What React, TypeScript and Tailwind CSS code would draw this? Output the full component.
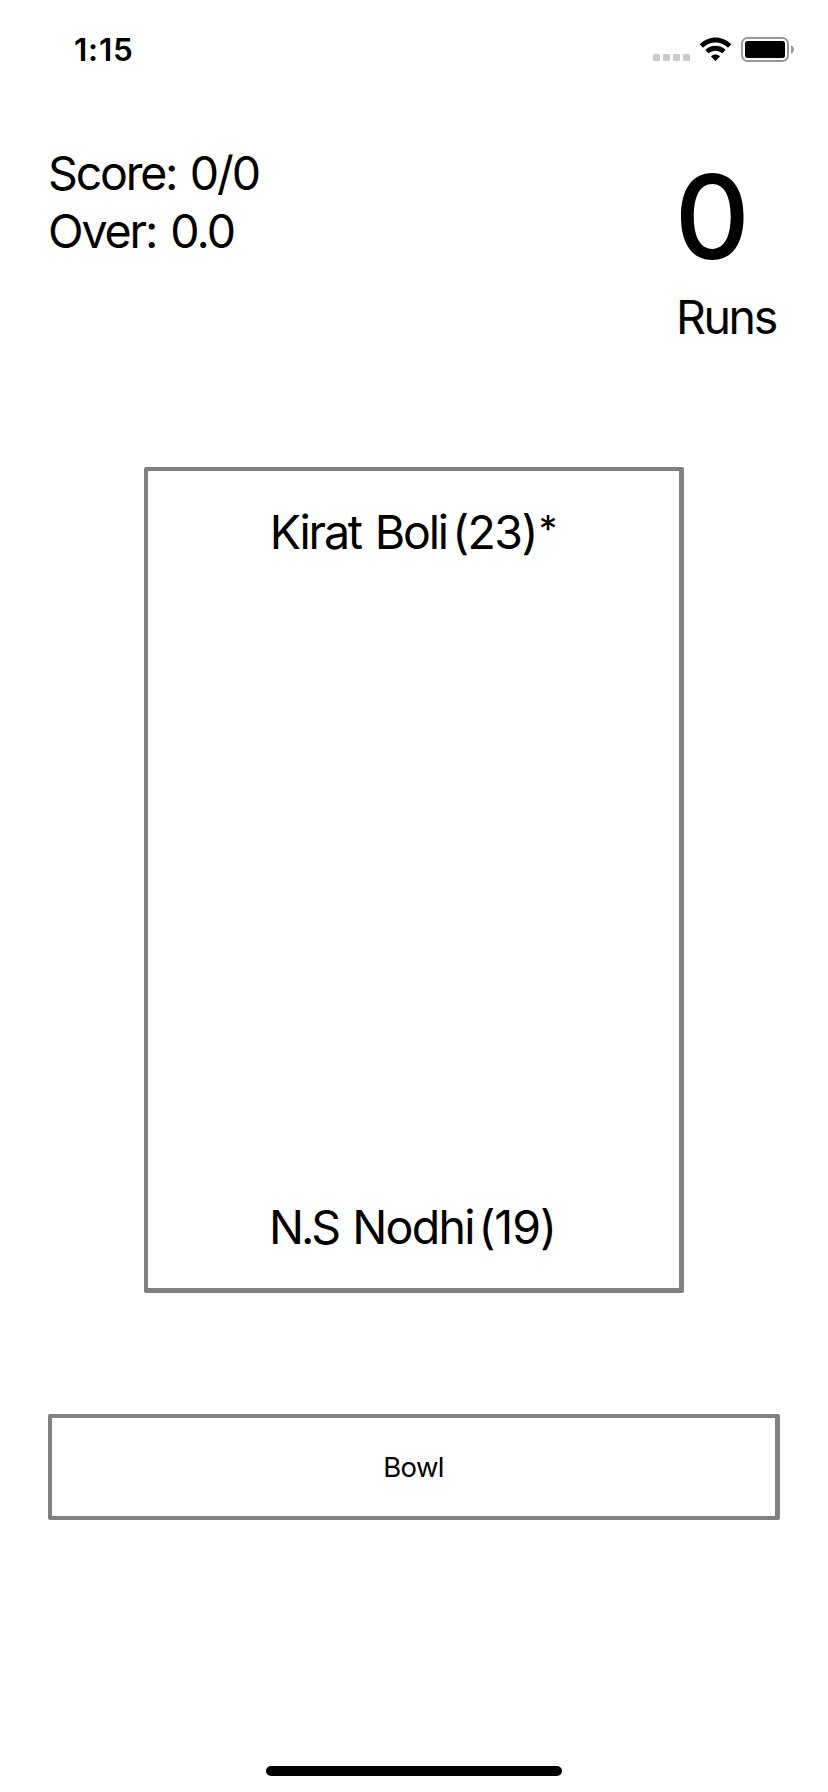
function StatusIcons() {
  return (
    <svg width="150" height="40" viewBox="650 30 150 40" aria-hidden="true">
      <g fill="#c9c9c9">
        <rect x="653" y="54" width="7" height="7" rx="1.5" />
        <rect x="663" y="54" width="7" height="7" rx="1.5" />
        <rect x="673" y="54" width="7" height="7" rx="1.5" />
        <rect x="683" y="54" width="7" height="7" rx="1.5" />
      </g>
      <g>
        <path d="M699.7 44.3C708.5 35.2 722.5 35.2 731.3 44.3L728 47.7C721 40.7 710 40.7 703 47.7Z" />
        <path d="M705.3 49.9C711 44.3 720 44.3 725.7 49.9L722.3 53.3C718.5 49.8 712.5 49.8 708.7 53.3Z" />
        <path d="M711 56.4C713.5 54 717.5 54 720 56.4L715.5 61Z" />
      </g>
      <rect x="742" y="38" width="46" height="23" rx="5.5" fill="none" stroke="#999999" strokeWidth="2" />
      <rect x="745" y="41" width="40" height="17" rx="2.5" />
      <path d="M791 45.5C795 46.5 795 52.5 791 53.5Z" fill="#999999" />
    </svg>
  );
}

export default function App() {
  return (
    <div className="flex h-[1792px] w-[828px] flex-col bg-white font-['Inter',sans-serif] text-black">
      <header className="flex h-[100px] shrink-0 items-center justify-between pr-[28px] pl-[74px]">
        <span className="text-[31.5px] font-semibold tracking-[0.8px]">1:15</span>
        <StatusIcons />
      </header>
      <main className="flex flex-col px-[48px] pt-[44px]">
        <section className="flex h-[323px] justify-between text-[46.5px] leading-[58px]">
          <div>
            <p className="tracking-[-2.2px] [word-spacing:2.5px]">
              Score: <span className="tracking-[-2px]">0/0</span>
            </p>
            <p className="tracking-[-2.1px] [word-spacing:3px]">
              Over: <span className="tracking-[-1.9px]">0.0</span>
            </p>
          </div>
          <div className="w-[104px] pt-px">
            <p className="-ml-[1.5px] text-[117px] leading-[143px] font-medium">0</p>
            <p className="tracking-[-2.4px]">Runs</p>
          </div>
        </section>
        <section className="mx-auto flex h-[826px] w-[540px] flex-col items-center justify-between rounded-[2px] border-4 border-r-5 border-b-5 border-[#808080] py-[32px] text-[46.5px] leading-[58px]">
          <p className="pr-[2px] tracking-[-2.2px] [word-spacing:3px]">
            Kirat Boli
            <span className="ml-[5.5px] tracking-[-1.6px]">(23)</span>
            <span className="relative -top-[7px] ml-[2px] text-[37px] leading-none">*</span>
          </p>
          <p className="pr-[2px] tracking-[-1.7px] [word-spacing:4px]">
            <span className="tracking-[-3px]">N.S </span>Nodhi
            <span className="ml-[4.5px] tracking-[-1px]">(19)</span>
          </p>
        </section>
        <button className="mt-[121px] h-[106px] w-full rounded-[2px] border-4 border-r-5 border-[#808080] pt-[2px] text-[27.5px] tracking-[-0.7px]">
          Bowl
        </button>
      </main>
      <div className="mx-auto mt-auto mb-[16px] h-[10px] w-[296px] rounded-full bg-black" />
    </div>
  );
}
